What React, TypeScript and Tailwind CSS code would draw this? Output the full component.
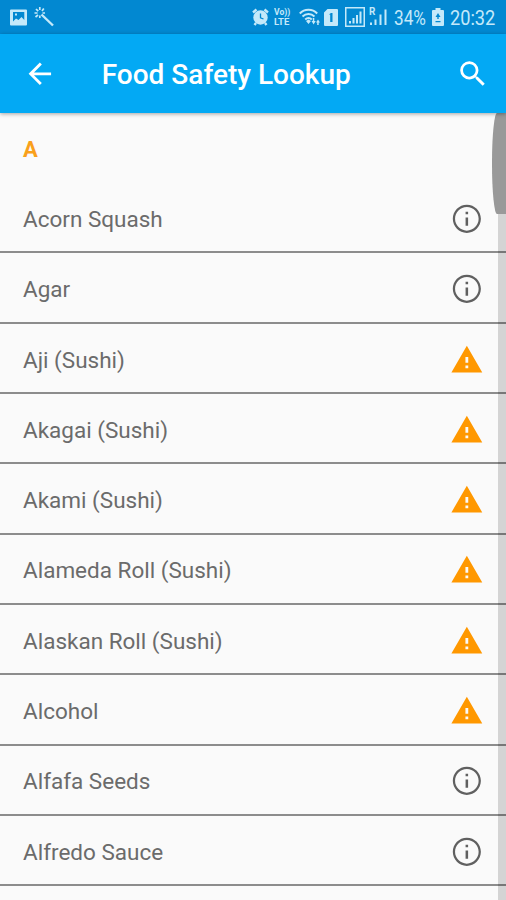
import React from "react";
import clsx from "clsx";

type Level = "info" | "warning";

interface Food {
  name: string;
  level: Level;
}

const foods: Food[] = [
  { name: "Acorn Squash", level: "info" },
  { name: "Agar", level: "info" },
  { name: "Aji (Sushi)", level: "warning" },
  { name: "Akagai (Sushi)", level: "warning" },
  { name: "Akami (Sushi)", level: "warning" },
  { name: "Alameda Roll (Sushi)", level: "warning" },
  { name: "Alaskan Roll (Sushi)", level: "warning" },
  { name: "Alcohol", level: "warning" },
  { name: "Alfafa Seeds", level: "info" },
  { name: "Alfredo Sauce", level: "info" },
];

const iconPaths = {
  back: "M20 11H7.83l5.59-5.59L12 4l-8 8 8 8 1.41-1.41L7.83 13H20v-2z",
  search:
    "M15.5 14h-.79l-.28-.27A6.471 6.471 0 0 0 16 9.5 6.5 6.5 0 1 0 9.5 16c1.61 0 3.09-.59 4.23-1.57l.27.28v.79l5 4.99L20.49 19l-4.99-5zm-6 0C7.01 14 5 11.99 5 9.5S7.01 5 9.5 5 14 7.01 14 9.5 11.99 14 9.5 14z",
  info: "M11.1 17h1.8v-6h-1.8v6zm.9-15C6.48 2 2 6.48 2 12s4.48 10 10 10 10-4.48 10-10S17.52 2 12 2zm0 18.4c-4.64 0-8.4-3.76-8.4-8.4s3.76-8.4 8.4-8.4 8.4 3.76 8.4 8.4-3.76 8.4-8.4 8.4zM11.1 8.8h1.8V7h-1.8v1.8z",
  warning: "M1 21h22L12 2 1 21zm12-3h-2v-2h2v2zm0-4h-2v-4h2v4z",
};

interface IconProps {
  name: keyof typeof iconPaths;
  className?: string;
}

const Icon: React.FC<IconProps> = ({ name, className }) => (
  <svg
    viewBox="0 0 24 24"
    fill="currentColor"
    className={clsx("w-[33.7px] h-[33.7px] shrink-0", className)}
  >
    <path d={iconPaths[name]} />
  </svg>
);

const StatusBar = () => (
  <div className="flex h-[34px] items-center bg-[#0288d1] pl-[10px] pr-[10px] text-[#c4e9fa]">
    <svg className="h-[17px] w-[17px]" viewBox="0 0 17 17">
      <path
        fill="currentColor"
        fillRule="evenodd"
        d="M1 .5h15a1 1 0 0 1 1 1v14a1 1 0 0 1-1 1H1a1 1 0 0 1-1-1v-14a1 1 0 0 1 1-1zM3 3v9.5l3-3 2.5 1.5 3-3 2.8 3V3H3zm2 1.5h2v2H5v-2z"
      />
    </svg>
    <svg
      className="ml-[7px] h-[20px] w-[21px]"
      viewBox="0 0 21 20"
      fill="none"
      stroke="currentColor"
    >
      <path strokeWidth="2.4" d="M7.5 7.5l11.5 11" />
      <path
        strokeWidth="1.7"
        d="M5.8 0v3M.5 6h3M2 2l2.2 2.2M9.8 1.5L8 4M1.5 10L4 8M8.5 6h2.5M5.8 8.5v2.5"
      />
    </svg>

    <div className="flex-1" />

    {/* alarm */}
    <svg className="h-[18px] w-[17px]" viewBox="0 0 17 18" fill="none" stroke="currentColor">
      <circle cx="8.5" cy="9.5" r="7.2" fill="currentColor" stroke="none" />
      <path strokeWidth="2.4" d="M1 4.5l3.5-3M16 4.5l-3.5-3M4 15l-1.5 2M13 15l1.5 2" />
      <path stroke="#0288d1" strokeWidth="1.3" d="M8.5 5.5v4.3l3 1.2" />
    </svg>
    <div className="ml-[5px] flex w-[18px] flex-col gap-px text-[9px] font-bold">
      <span className="block h-[9px] origin-left scale-x-[.95] leading-[9px]">
        Vo))
      </span>
      <span className="block h-[9px] origin-left scale-x-[1.05] leading-[9px]">
        LTE
      </span>
    </div>
    {/* wifi with transfer arrows */}
    <svg
      className="ml-[7px] h-[18px] w-[22px]"
      viewBox="0 0 22 18"
      fill="none"
      stroke="currentColor"
    >
      <path
        strokeWidth="2"
        d="M.8 5.5C5.5 .6 13.5 .6 18.2 5.5M3.5 8.5c3.5-3.3 8.5-3.3 12 0M6.2 11.5c2-1.9 4.6-1.9 6.6 0"
      />
      <path
        fill="currentColor"
        stroke="none"
        d="M7 13l2.5-1.5L12 13l-2.5 3zM12.5 13h1.3v-3h1.5v3h1.4l-2.1 3.5zM17 14.5l2-3 2 3h-1.3v2.5h-1.5v-2.5z"
      />
    </svg>
    <svg className="ml-[3px] h-[17px] w-[14px]" viewBox="0 0 14 17">
      <path
        fill="currentColor"
        fillRule="evenodd"
        d="M3.5 0H13a1 1 0 0 1 1 1v15a1 1 0 0 1-1 1H1a1 1 0 0 1-1-1V3.5zM4.8 5.5h1.4V13h2.3V4H7z"
      />
    </svg>
    <svg className="ml-[7px] h-[20px] w-[20px]" viewBox="0 0 20 20">
      <path
        fill="none"
        stroke="currentColor"
        strokeWidth="1.5"
        d="M.75.75h18.5v18.5H.75z"
      />
      <path
        fill="currentColor"
        d="M4 14h2v2.5H4zM7.5 11h2v5.5h-2zM11 8h2v8.5h-2zM14.5 4.5h2v12h-2z"
      />
    </svg>
    <div className="relative ml-[4px] h-[18px] w-[17px]">
      <span className="absolute left-0 -top-[1px] text-[10px] font-bold leading-[10px]">
        R
      </span>
      <svg className="h-[18px] w-[18px]" viewBox="0 0 18 18">
        <path
          fill="currentColor"
          d="M1 14.5h2V17H1zM5.5 11.5h2V17h-2zM10.5 6.5h2V17h-2zM15.5 1.5h2V17h-2z"
        />
      </svg>
    </div>
    <div className="ml-[8px] w-[34px] whitespace-nowrap text-[20px] leading-[34px]">
      <span className="inline-block origin-left translate-y-px scale-x-[.86]">
        34%
      </span>
    </div>
    <svg className="ml-[4px] h-[18px] w-[12px]" viewBox="0 0 12 18">
      <path
        fill="currentColor"
        fillRule="evenodd"
        d="M3.5 0h5v2H11a1 1 0 0 1 1 1v14a1 1 0 0 1-1 1H1a1 1 0 0 1-1-1V3a1 1 0 0 1 1-1h2.5zM6 5L3.5 9h1.8v2h1.4V9h1.8zM3.5 13v1.2h5V13z"
      />
    </svg>
    <div className="ml-[6px] w-[46px] whitespace-nowrap text-[20px] leading-[34px]">
      <span className="inline-block origin-left translate-y-px scale-x-[.91]">
        20:32
      </span>
    </div>
  </div>
);

const AppBar = () => (
  <header className="relative z-10 flex h-[79px] items-center bg-[#03a9f4] pl-[23px] pr-[16px] text-white shadow-[0_1px_4px_rgba(0,0,0,0.35)]">
    <Icon name="back" />
    <h1 className="ml-[45px] flex-1 pt-[3px] text-[28px] font-medium leading-[34px]">
      Food Safety Lookup
    </h1>
    <Icon name="search" />
  </header>
);

const FoodRow: React.FC<{ food: Food }> = ({ food }) => (
  <li className="flex h-[70.3px] items-center justify-between border-b-2 border-[#8c8c8c] pl-[23px] pr-[22px] pt-[3px]">
    <span className="pt-[2px] text-[22.5px] text-[#6b6b6b]">{food.name}</span>
    <Icon
      name={food.level}
      className={food.level === "info" ? "text-[#606060]" : "text-[#ff9800]"}
    />
  </li>
);

const App: React.FC = () => {
  return (
    <div className="flex h-[900px] w-[506px] flex-col overflow-hidden bg-[#fafafa] font-['Roboto',sans-serif]">
      <StatusBar />
      <AppBar />
      <main className="relative flex-1 overflow-hidden">
        <h2 className="flex h-[70.2px] items-center pl-[23px] pt-[3px] text-[22px] font-bold text-[#f9a01b]">
          A
        </h2>
        <ul>
          {foods.map((food) => (
            <FoodRow key={food.name} food={food} />
          ))}
        </ul>
        {/* fast scroller */}
        <div className="absolute inset-y-0 right-0 w-[8px] bg-black/15" />
        <div className="absolute right-0 top-0 h-[101px] w-[14px] rounded-l-[5px_50px] bg-[#999999]" />
      </main>
    </div>
  );
};

export default App;
